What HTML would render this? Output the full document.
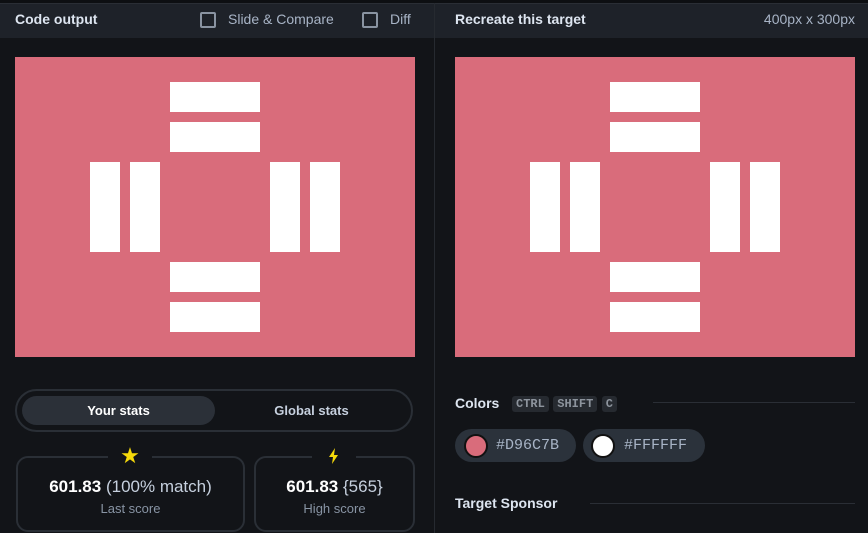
<!DOCTYPE html><html><head><style>
body{margin:0;width:868px;height:533px;background:#121418;font-family:"Liberation Sans",sans-serif;position:relative;overflow:hidden;color:#fff}
.a{position:absolute}
.hdr{top:3px;height:34px;background:#1e2229;border-top:1px solid #2a2e35}
.cv{width:400px;height:300px;background:#d96c7b;top:57px}
.cv div{position:absolute;background:#fff}
.t{font-weight:bold;font-size:14px;color:#dde5f0}
.cb{width:12px;height:12px;border:2px solid #8a94a2;border-radius:2px}
.kbd{background:#262a30;border-radius:3px;font-family:"Liberation Mono",monospace;font-weight:bold;font-size:12px;color:#8d949d;padding:1px 4px}
</style></head><body>
<div class="a" style="top:0;left:0;width:868px;height:3px;background:#0d0f12"></div>
<div class="a hdr" style="left:0;width:434px"></div>
<div class="a hdr" style="left:435px;width:433px"></div>
<div class="a" style="left:434px;top:3px;width:1px;height:530px;background:#262a30"></div>
<div class="a t" style="left:15px;top:11px">Code output</div>
<div class="a cb" style="left:200px;top:12px"></div>
<div class="a" style="left:228px;top:11px;font-size:14px;color:#a8b4c6">Slide &amp; Compare</div>
<div class="a cb" style="left:362px;top:12px"></div>
<div class="a" style="left:390px;top:11px;font-size:14px;color:#a8b4c6">Diff</div>
<div class="a t" style="left:455px;top:11px">Recreate this target</div>
<div class="a" style="right:13px;top:11px;font-size:14px;color:#a8b4c6">400px x 300px</div>
<div class="a cv" style="left:15px"><div style="left:155px;top:25px;width:90px;height:30px"></div><div style="left:155px;top:65px;width:90px;height:30px"></div><div style="left:75px;top:105px;width:30px;height:90px"></div><div style="left:115px;top:105px;width:30px;height:90px"></div><div style="left:255px;top:105px;width:30px;height:90px"></div><div style="left:295px;top:105px;width:30px;height:90px"></div><div style="left:155px;top:205px;width:90px;height:30px"></div><div style="left:155px;top:245px;width:90px;height:30px"></div></div>
<div class="a cv" style="left:455px"><div style="left:155px;top:25px;width:90px;height:30px"></div><div style="left:155px;top:65px;width:90px;height:30px"></div><div style="left:75px;top:105px;width:30px;height:90px"></div><div style="left:115px;top:105px;width:30px;height:90px"></div><div style="left:255px;top:105px;width:30px;height:90px"></div><div style="left:295px;top:105px;width:30px;height:90px"></div><div style="left:155px;top:205px;width:90px;height:30px"></div><div style="left:155px;top:245px;width:90px;height:30px"></div></div>
<div class="a" style="left:15px;top:389px;width:394px;height:39px;border:2px solid #2a2f36;border-radius:22px"></div>
<div class="a" style="left:22px;top:396px;width:193px;height:29px;background:#2b3038;border-radius:15px;text-align:center;line-height:29px;font-size:13px;font-weight:bold">Your stats</div>
<div class="a" style="left:215px;top:396px;width:193px;line-height:29px;text-align:center;font-size:13px;font-weight:bold;color:#c6d0de">Global stats</div>
<div class="a" style="left:16px;top:456px;width:225px;height:72px;border:2px solid #2a2f36;border-radius:12px"></div>
<div class="a" style="left:254px;top:456px;width:157px;height:72px;border:2px solid #2a2f36;border-radius:12px"></div>
<div class="a" style="left:108px;top:446px;width:44px;height:20px;background:#121418;color:#f5d90a;text-align:center;font-size:22px;line-height:20px">★</div>
<div class="a" style="left:312px;top:448px;width:44px;height:16px;background:#121418;text-align:center"><svg width="12" height="16" viewBox="0 0 12 16"><path d="M7 0L1 9h4l-1 7 6-9H6z" fill="#f5d90a"/></svg></div>
<div class="a" style="left:16px;top:477px;width:229px;text-align:center;font-size:17px"><b>601.83</b> <span style="color:#c6d0de">(100% match)</span></div>
<div class="a" style="left:16px;top:501px;width:229px;text-align:center;font-size:13px;color:#8894a4">Last score</div>
<div class="a" style="left:254px;top:477px;width:161px;text-align:center;font-size:17px"><b>601.83</b> <span style="color:#c6d0de">{565}</span></div>
<div class="a" style="left:254px;top:501px;width:161px;text-align:center;font-size:13px;color:#8894a4">High score</div>
<div class="a t" style="left:455px;top:395px">Colors</div>
<div class="a" style="left:512px;top:394px"><span class="kbd">CTRL</span> <span class="kbd">SHIFT</span> <span class="kbd">C</span></div>
<div class="a" style="left:653px;top:402px;width:202px;height:1px;background:#2a2e35"></div>
<div class="a" style="left:455px;top:429px;width:121px;height:33px;background:#2b323b;border-radius:17px"></div>
<div class="a" style="left:464px;top:434px;width:20px;height:20px;border-radius:50%;background:#d96c7b;border:2px solid #111"></div>
<div class="a" style="left:496px;top:437px;font-family:'Liberation Mono',monospace;font-size:15px;color:#a8b4c6">#D96C7B</div>
<div class="a" style="left:583px;top:429px;width:122px;height:33px;background:#2b323b;border-radius:17px"></div>
<div class="a" style="left:591px;top:434px;width:20px;height:20px;border-radius:50%;background:#fff;border:2px solid #111"></div>
<div class="a" style="left:624px;top:437px;font-family:'Liberation Mono',monospace;font-size:15px;color:#a8b4c6">#FFFFFF</div>
<div class="a t" style="left:455px;top:495px">Target Sponsor</div>
<div class="a" style="left:590px;top:503px;width:265px;height:1px;background:#2a2e35"></div>
</body></html>
